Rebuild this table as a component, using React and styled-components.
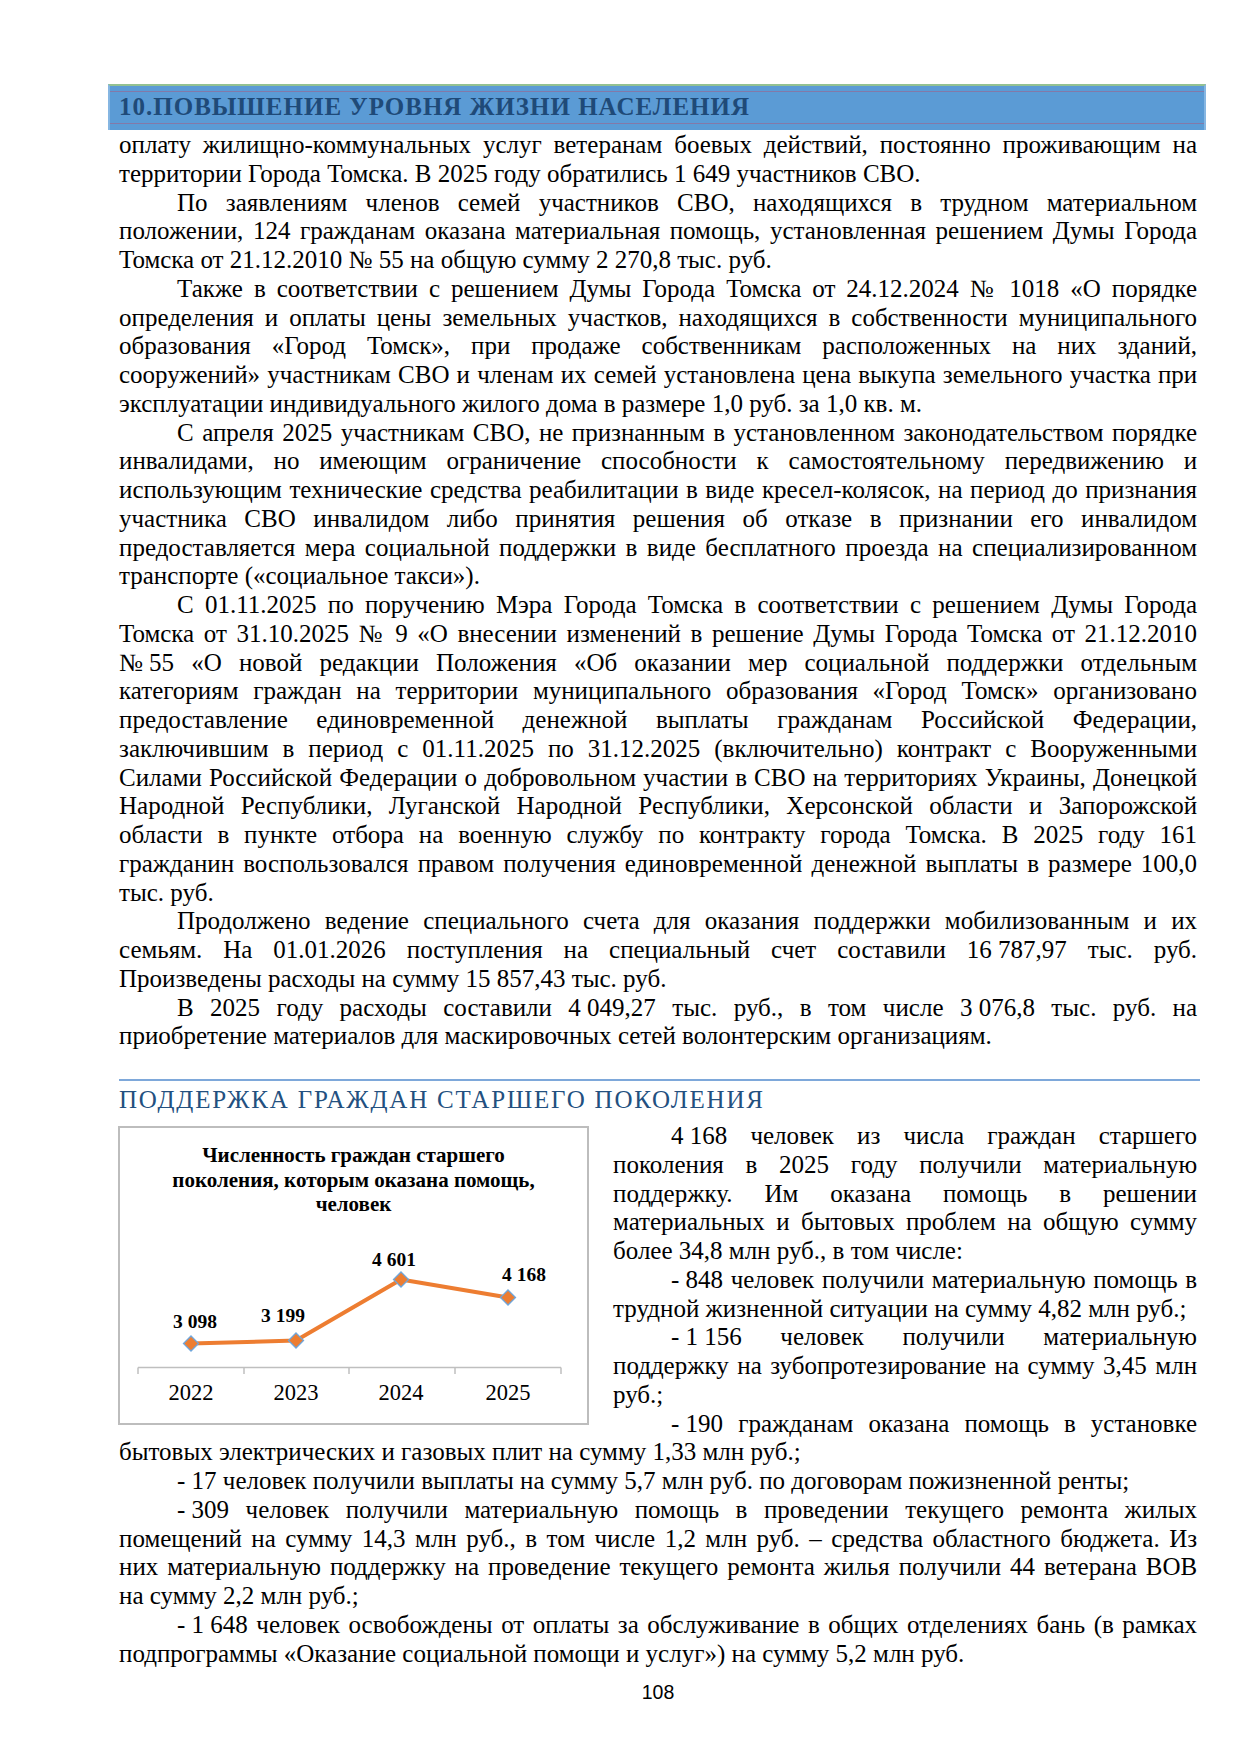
import styled, { createGlobalStyle } from "styled-components";

const GlobalStyle = createGlobalStyle`
  html, body {
    margin: 0;
    padding: 0;
    background: #fff;
  }
  body {
    font-family: "Liberation Serif", "Times New Roman", serif;
    color: #000;
  }
`;

const Page = styled.div`
  width: 1240px;
  height: 1754px;
  box-sizing: border-box;
  padding: 84px 43px 0 119px;
`;

const ChapterBar = styled.div`
  margin: 0 -9px 0 -11px;
  height: 46px;
  box-sizing: border-box;
  background: #5b9bd5;
  border-top: 2px solid #93c191;
  border-left: 2px solid #86b6e2;
  border-right: 2px solid #86b6e2;
  padding: 5px 0 6px;
`;

const ChapterTitle = styled.h1`
  margin: 0;
  height: 100%;
  box-sizing: border-box;
  border-top: 1px solid #8379a8;
  border-bottom: 1px solid #8379a8;
  display: flex;
  align-items: center;
  padding: 0 0 2px 9px;
  font: bold 25px/1 "Liberation Serif", serif;
  letter-spacing: 1px;
  color: #1f4a78;
`;

const Text = styled.div`
  font-size: 25px;
  line-height: 28.75px;
  margin-top: ${(p) => p.$top || 0}px;
`;

const Ln = styled.span`
  display: block;
  text-align: ${(p) => (p.$last ? "left" : "justify")};
  text-align-last: ${(p) => (p.$last ? "left" : "justify")};
  padding-left: ${(p) => (p.$indent ? "58px" : "0")};
`;

/* numbers like "4 168" or "- 190" that must not stretch when justified */
const Keep = styled.span`
  display: inline-block;
  white-space: pre;
`;

const SectionRule = styled.div`
  margin: 28px -3px 0 0;
  height: 2px;
  background: #7ea8da;
`;

const SectionTitle = styled.h2`
  margin: 4px 0 0;
  font: normal 25px/30px "Liberation Serif", serif;
  letter-spacing: 1.8px;
  color: #23507f;
`;

const SplitRow = styled.div`
  display: grid;
  grid-template-columns: 471px 1fr;
  column-gap: 23px;
  align-items: start;
  margin-top: 7px;
`;

const ChartBox = styled.figure`
  margin: 4px 0 0 -1px;
  width: 471px;
  height: 299px;
  box-sizing: border-box;
  border: 2px solid #bdbdbd;
  display: flex;
  flex-direction: column;
`;

const ChartTitle = styled.figcaption`
  padding-top: 15px;
  text-align: center;
  font: bold 21px/24.5px "Liberation Serif", serif;
`;

const ChartSvg = styled.svg`
  display: block;
  flex: 1;
  width: 467px;
`;

const PageNumber = styled.div`
  margin-top: 15px;
  text-align: center;
  font: 19.5px/1 "Liberation Sans", Arial, sans-serif;
`;

const intro = [
  {
    indent: false,
    lines: [
      "оплату жилищно-коммунальных услуг ветеранам боевых действий, постоянно проживающим на",
      "территории Города Томска. В 2025 году обратились 1~649 участников СВО.",
    ],
  },
  {
    lines: [
      "По заявлениям членов семей участников СВО, находящихся в трудном материальном",
      "положении, 124 гражданам оказана материальная помощь, установленная решением Думы Города",
      "Томска от 21.12.2010 №~55 на общую сумму 2~270,8 тыс. руб.",
    ],
  },
  {
    lines: [
      "Также в соответствии с решением Думы Города Томска от 24.12.2024 № 1018 «О порядке",
      "определения и оплаты цены земельных участков, находящихся в собственности муниципального",
      "образования «Город Томск», при продаже собственникам расположенных на них зданий,",
      "сооружений» участникам СВО и членам их семей установлена цена выкупа земельного участка при",
      "эксплуатации индивидуального жилого дома в размере 1,0 руб. за 1,0 кв. м.",
    ],
  },
  {
    lines: [
      "С апреля 2025 участникам СВО, не признанным в установленном законодательством порядке",
      "инвалидами, но имеющим ограничение способности к самостоятельному передвижению и",
      "использующим технические средства реабилитации в виде кресел-колясок, на период до признания",
      "участника СВО инвалидом либо принятия решения об отказе в признании его инвалидом",
      "предоставляется мера социальной поддержки в виде бесплатного проезда на специализированном",
      "транспорте («социальное такси»).",
    ],
  },
  {
    lines: [
      "С 01.11.2025 по поручению Мэра Города Томска в соответствии с решением Думы Города",
      "Томска от 31.10.2025 № 9 «О внесении изменений в решение Думы Города Томска от 21.12.2010",
      "№~55 «О новой редакции Положения «Об оказании мер социальной поддержки отдельным",
      "категориям граждан на территории муниципального образования «Город Томск» организовано",
      "предоставление единовременной денежной выплаты гражданам Российской Федерации,",
      "заключившим в период с 01.11.2025 по 31.12.2025 (включительно) контракт с Вооруженными",
      "Силами Российской Федерации о добровольном участии в СВО на территориях Украины, Донецкой",
      "Народной Республики, Луганской Народной Республики, Херсонской области и Запорожской",
      "области в пункте отбора на военную службу по контракту города Томска. В 2025 году 161",
      "гражданин воспользовался правом получения единовременной денежной выплаты в размере 100,0",
      "тыс. руб.",
    ],
  },
  {
    lines: [
      "Продолжено ведение специального счета для оказания поддержки мобилизованным и их",
      "семьям. На 01.01.2026 поступления на специальный счет составили 16~787,97 тыс. руб.",
      "Произведены расходы на сумму 15~857,43 тыс. руб.",
    ],
  },
  {
    lines: [
      "В 2025 году расходы составили 4~049,27 тыс. руб., в том числе 3~076,8 тыс. руб. на",
      "приобретение материалов для маскировочных сетей волонтерским организациям.",
    ],
  },
];

const besideChart = [
  {
    lines: [
      "4~168 человек из числа граждан старшего",
      "поколения в 2025 году получили материальную",
      "поддержку. Им оказана помощь в решении",
      "материальных и бытовых проблем на общую сумму",
      "более 34,8 млн руб., в том числе:",
    ],
  },
  {
    lines: [
      "-~848 человек получили материальную помощь в",
      "трудной жизненной ситуации на сумму 4,82 млн руб.;",
    ],
  },
  {
    lines: [
      "-~1~156 человек получили материальную",
      "поддержку на зубопротезирование на сумму 3,45 млн",
      "руб.;",
    ],
  },
  { open: true, lines: ["-~190 гражданам оказана помощь в установке"] },
];

const belowChart = [
  { indent: false, lines: ["бытовых электрических и газовых плит на сумму 1,33 млн руб.;"] },
  { lines: ["-~17 человек получили выплаты на сумму 5,7 млн руб. по договорам пожизненной ренты;"] },
  {
    lines: [
      "-~309 человек получили материальную помощь в проведении текущего ремонта жилых",
      "помещений на сумму 14,3 млн руб., в том числе 1,2 млн руб. – средства областного бюджета. Из",
      "них материальную поддержку на проведение текущего ремонта жилья получили 44 ветерана ВОВ",
      "на сумму 2,2 млн руб.;",
    ],
  },
  {
    lines: [
      "-~1~648 человек освобождены от оплаты за обслуживание в общих отделениях бань (в рамках",
      "подпрограммы «Оказание социальной помощи и услуг») на сумму 5,2 млн руб.",
    ],
  },
];

// "~" marks a space that stays narrow, as a non-breaking space does in the document
function words(t) {
  return t.split(/( )/).map((w, i) =>
    w.includes("~") ? <Keep key={i}>{w.replace(/~/g, " ")}</Keep> : w
  );
}

function Paragraphs({ items }) {
  return items.map((p, pi) =>
    p.lines.map((t, li) => (
      <Ln
        key={pi + "-" + li}
        $indent={li === 0 && p.indent !== false}
        $last={li === p.lines.length - 1 && !p.open}
      >
        {words(t)}
      </Ln>
    ))
  );
}

const points = [
  { year: "2022", label: "3 098", x: 71, y: 126.5, lx: 75, ly: 110.5 },
  { year: "2023", label: "3 199", x: 176, y: 123.5, lx: 163, ly: 104.5 },
  { year: "2024", label: "4 601", x: 281, y: 62.5, lx: 274, ly: 48.5 },
  { year: "2025", label: "4 168", x: 388, y: 80.5, lx: 404, ly: 63.5 },
];

const ticks = [18, 124, 229, 335, 441];
const m = 7.5; // half diagonal of a diamond marker

function ElderChart() {
  const line = points.map((p) => `${p.x},${p.y}`).join(" ");
  return (
    <ChartBox>
      <ChartTitle>
        Численность граждан старшего
        <br />
        поколения, которым оказана помощь,
        <br />
        человек
      </ChartTitle>
      <ChartSvg viewBox="0 0 467 206" preserveAspectRatio="xMinYMin meet">
        <line x1="18" y1="150.5" x2="441" y2="150.5" stroke="#bfbfbf" strokeWidth="1.5" />
        {ticks.map((x) => (
          <line key={x} x1={x} y1="150.5" x2={x} y2="157" stroke="#bfbfbf" strokeWidth="1.5" />
        ))}
        <polyline points={line} fill="none" stroke="#ed7d31" strokeWidth="4" strokeLinejoin="round" />
        {points.map((p) => (
          <g key={p.year}>
            <polygon
              points={`${p.x},${p.y - m} ${p.x + m},${p.y} ${p.x},${p.y + m} ${p.x - m},${p.y}`}
              fill="#ed7d31"
              stroke="#6fa6db"
              strokeWidth="1.3"
            />
            <text
              x={p.lx}
              y={p.ly}
              textAnchor="middle"
              fontFamily="Liberation Serif, serif"
              fontWeight="bold"
              fontSize="19.5"
            >
              {p.label}
            </text>
            <text x={p.x} y="183" textAnchor="middle" fontFamily="Liberation Serif, serif" fontSize="22.5">
              {p.year}
            </text>
          </g>
        ))}
      </ChartSvg>
    </ChartBox>
  );
}

export default function App() {
  return (
    <>
      <GlobalStyle />
      <Page>
        <ChapterBar>
          <ChapterTitle>10.ПОВЫШЕНИЕ УРОВНЯ ЖИЗНИ НАСЕЛЕНИЯ</ChapterTitle>
        </ChapterBar>
        <Text $top={1}>
          <Paragraphs items={intro} />
        </Text>
        <SectionRule />
        <SectionTitle>ПОДДЕРЖКА ГРАЖДАН СТАРШЕГО ПОКОЛЕНИЯ</SectionTitle>
        <SplitRow>
          <ElderChart />
          <Text>
            <Paragraphs items={besideChart} />
          </Text>
        </SplitRow>
        <Text>
          <Paragraphs items={belowChart} />
        </Text>
        <PageNumber>108</PageNumber>
      </Page>
    </>
  );
}
